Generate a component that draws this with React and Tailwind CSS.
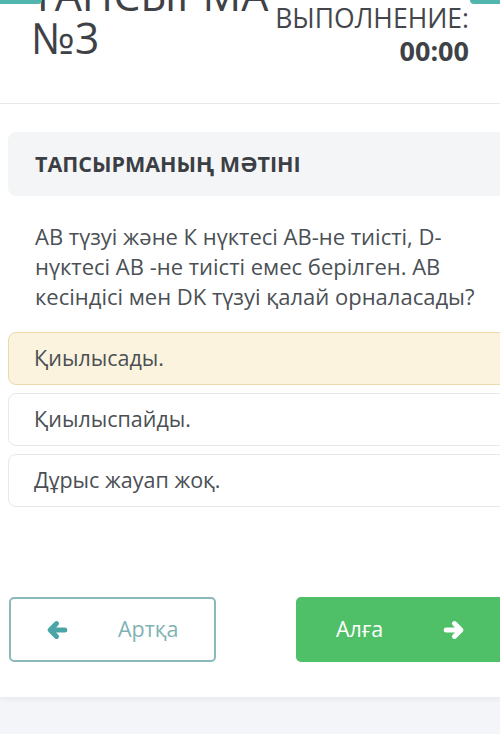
import React from "react";

const ArrowLeftIcon = ({ className }) => (
  <svg
    viewBox="0 0 24 24"
    className={className}
    fill="none"
    stroke="currentColor"
    strokeWidth="5.5"
    strokeLinecap="round"
    strokeLinejoin="round"
  >
    <path d="M20.5 12H5M11.5 5L4.5 12l7 7" />
  </svg>
);

const ArrowRightIcon = ({ className }) => (
  <svg
    viewBox="0 0 24 24"
    className={className}
    fill="none"
    stroke="currentColor"
    strokeWidth="5.5"
    strokeLinecap="round"
    strokeLinejoin="round"
  >
    <path d="M3.5 12H19M12.5 5l7 7-7 7" />
  </svg>
);

const answers = ["Қиылысады.", "Қиылыспайды.", "Дұрыс жауап жоқ."];

export default function App() {
  const selected = 0;

  return (
    <div
      className="min-h-screen overflow-hidden bg-[#f3f5f8]"
      style={{ fontFamily: '"Open Sans", "Noto Sans", sans-serif' }}
    >
      <div className="bg-white pb-[35px] shadow-[0_2px_6px_rgba(0,0,0,0.06)]">
        {/* header */}
        <div className="relative h-[104px] border-b border-[#e6e8eb]">
          <div className="absolute left-0 top-0 h-[4px] w-[42px] rounded-br-[6px] bg-[#52b5ae]" />
          <div className="absolute right-0 top-0 h-[4px] w-[30px] rounded-bl-[6px] bg-[#52b5ae]" />
          <div className="flex justify-between pl-[31px] pr-[31px]">
            <h1 className="mt-[-27px] shrink-0 text-[43px] font-normal leading-[43px] text-[#3e4247]">
              ТАПСЫРМА
              <br />
              №3
            </h1>
            <div className="mt-[4px] shrink-0 text-right text-[#3e4247]">
              <div className="text-[26.5px] leading-[28px] text-[#43474c]">ВЫПОЛНЕНИЕ:</div>
              <div className="mt-[3px] text-[27px] font-bold leading-[32px]">00:00</div>
            </div>
          </div>
        </div>

        {/* task text */}
        <div className="ml-[8px] mt-[28px] flex h-[64px] items-center rounded-l-[8px] bg-[#f4f5f7] pl-[27px]">
          <h2 className="text-[21.5px] font-bold text-[#3b3f44]">ТАПСЫРМАНЫҢ МӘТІНІ</h2>
        </div>

        <p className="mt-[25px] pl-[35px] pr-[4px] text-[22px] leading-[30px] text-[#4b5055]">
          АВ түзуі және К нүктесі АВ-не тиісті, D-нүктесі АВ -не тиісті емес берілген. АВ кесіндісі мен DK түзуі қалай орналасады?
        </p>

        {/* answers */}
        <div className="ml-[8px] mr-[-6px] mt-[21px] flex flex-col gap-[8px]">
          {answers.map((a, i) => (
            <div
              key={i}
              className={
                i === selected
                  ? "flex h-[53px] items-center rounded-[8px] border border-[#ebd9aa] bg-[#fcf3de] pl-[25px] text-[21.5px] text-[#4a4f54]"
                  : "flex h-[53px] items-center rounded-[8px] border border-[#e6e8eb] bg-white pl-[25px] text-[21.5px] text-[#4a4f54]"
              }
            >
              {a}
            </div>
          ))}
        </div>

        {/* navigation */}
        <div className="mt-[90px] flex gap-[80px] pl-[9px]">
          <button className="flex h-[65px] w-[207px] items-center rounded-[5px] border-2 border-[#8bb8b8] bg-white pl-[35px] text-[21.5px] text-[#7fb2b2]">
            <ArrowLeftIcon className="h-[22px] w-[22px] text-[#4aa6a6]" />
            <span className="ml-[50px]">Артқа</span>
          </button>
          <button className="flex h-[65px] flex-1 items-center rounded-l-[5px] bg-[#4fbf68] pl-[40px] text-[21.5px] text-white">
            <span>Алға</span>
            <ArrowRightIcon className="ml-[60px] h-[22px] w-[22px]" />
          </button>
        </div>
      </div>
    </div>
  );
}
